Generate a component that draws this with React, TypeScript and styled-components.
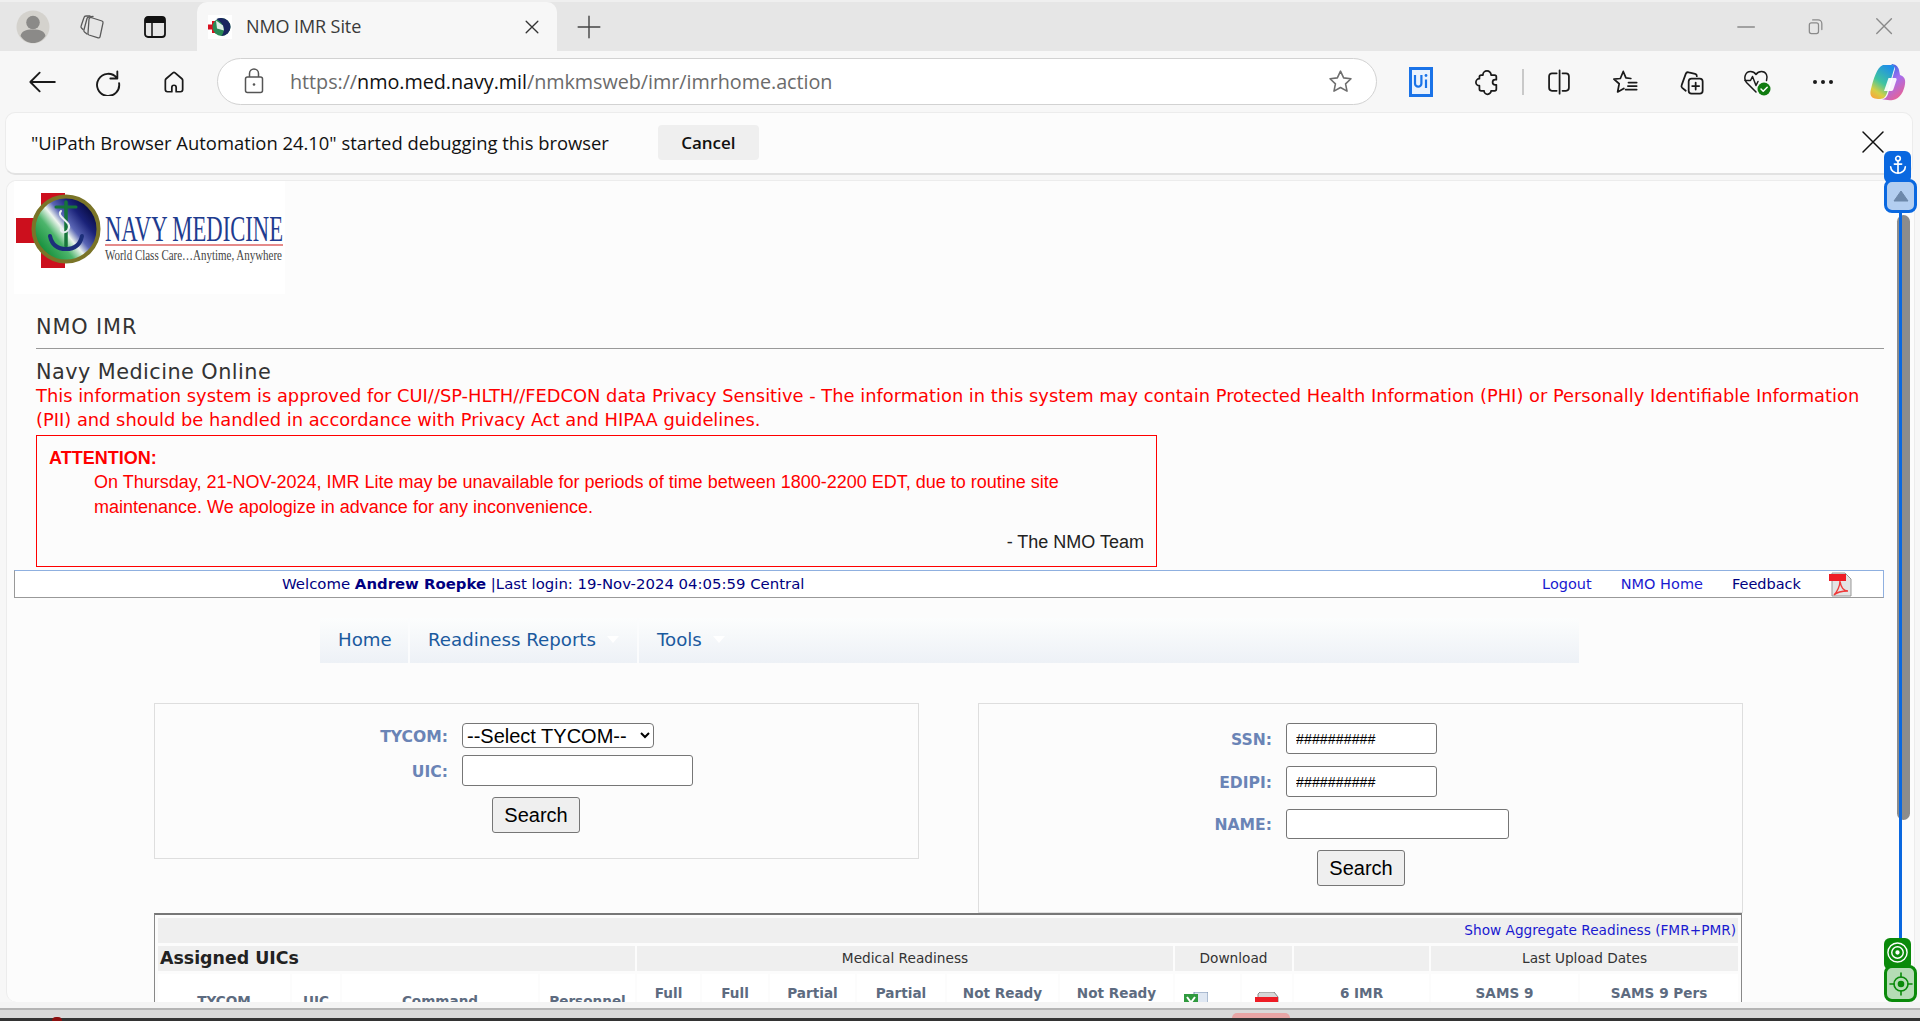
import React from 'react';
import styled, { createGlobalStyle } from 'styled-components';

const GlobalStyle = createGlobalStyle`
  html, body {
    margin: 0;
    padding: 0;
    background: #f7f7f7;
    overflow: hidden;
  }
  * { box-sizing: border-box; }
`;

const verdana = '"DejaVu Sans", Verdana, sans-serif';
const arial = '"Liberation Sans", Arial, sans-serif';
const segoe = '"Open Sans", "Noto Sans", sans-serif';

const Shell = styled.div`
  position: relative;
  width: 1920px;
  height: 1021px;
  overflow: hidden;
  display: flex;
  flex-direction: column;
  background: #f7f7f7;
`;

/* ---- browser chrome ---- */
const TabBar = styled.div`
  height: 51px;
  flex: none;
  display: flex;
  align-items: flex-end;
  background: #e6e6e6;
  border-top: 2px solid #efefef;
`;
const ChromeIcon = styled.span<{ $w: number; $ml?: number }>`
  width: ${(p) => p.$w}px;
  height: 49px;
  margin-left: ${(p) => p.$ml || 0}px;
  flex: none;
  display: flex;
  align-items: center;
  justify-content: center;
`;
const Tab = styled.div`
  width: 360px;
  height: 49px;
  margin-left: 30px;
  flex: none;
  display: flex;
  align-items: center;
  padding-left: 11px;
  background: #f7f7f7;
  border-radius: 10px 10px 0 0;
  font: 400 18px ${segoe};
  color: #3a3a3a;
`;
const TabTitle = styled.span`
  margin: -2px 0 0 14px;
  flex: 1;
  letter-spacing: -0.1px;
`;
const WindowButtons = styled.div`
  margin-left: auto;
  padding-right: 1px;
  display: flex;
`;
const Toolbar = styled.div`
  height: 61px;
  flex: none;
  display: flex;
  align-items: center;
  padding-left: 9px;
`;
const ToolIcon = styled.span<{ $w?: number }>`
  width: ${(p) => p.$w || 66}px;
  flex: none;
  display: flex;
  justify-content: center;
  align-items: center;
`;
const AddressBar = styled.div`
  width: 1160px;
  height: 47px;
  margin: -1px 11px 0 10px;
  flex: none;
  display: flex;
  align-items: center;
  padding: 0 22px 0 26px;
  background: #fff;
  border: 1.5px solid #d2d2d2;
  border-radius: 24px;
`;
const Url = styled.span`
  flex: 1;
  margin-left: 26px;
  font: 400 19.8px ${segoe};
  color: #6b6b6b;
  letter-spacing: -0.05px;
  b {
    font-weight: 400;
    color: #111;
  }
`;
const ToolDivider = styled.span`
  width: 2px;
  height: 26px;
  margin: 0 2px;
  flex: none;
  background: #c9c9c9;
`;
const InfoBar = styled.div`
  height: 63px;
  margin: 0 7px 5px 5px;
  flex: none;
  display: flex;
  align-items: center;
  padding: 0 27px 2px 25px;
  background: #fcfcfc;
  border: 1px solid #ececec;
  border-bottom: 2px solid #e2e2e2;
  border-radius: 10px;
  font: 400 18.4px ${segoe};
  color: #111;
`;
const CancelButton = styled.span`
  width: 101px;
  height: 35px;
  margin-left: 49px;
  display: flex;
  align-items: center;
  justify-content: center;
  background: #efefef;
  border-radius: 4px;
  font-size: 17px;
  font-weight: 600;
`;
const InfoClose = styled.span`
  margin-left: auto;
  display: flex;
`;

/* ---- the page ---- */
const Page = styled.main`
  height: 822px;
  margin: 0 5px 0 6px;
  flex: none;
  overflow: hidden;
  background: #fcfcfc;
  border: 1px solid #ececec;
  border-bottom: 0;
  border-radius: 10px;
  font-family: ${verdana};
`;
const LogoBox = styled.div`
  width: 271px;
  height: 113px;
  margin-left: 7px;
  background: #fff;
`;
const PageHead = styled.div`
  margin: 0 30px 0 29px;
`;
const SiteName = styled.div`
  height: 55px;
  padding-top: 20px;
  border-bottom: 1px solid #999;
  font-size: 20.8px;
  line-height: 26px;
  letter-spacing: 0.9px;
  color: #333;
`;
const SiteTitle = styled.h1`
  margin: 11px 0 0;
  font-size: 20.8px;
  font-weight: 400;
  line-height: 24px;
  letter-spacing: 0.45px;
  color: #333;
`;
const Notice = styled.p`
  margin: 0;
  font-size: 17.85px;
  line-height: 24px;
  color: #f00;
`;
const AttentionBox = styled.div`
  width: 1121px;
  height: 132px;
  margin-top: 3px;
  padding: 10px 12px 0;
  border: 1px solid #f00;
  font-family: ${arial};
  font-size: 18px;
  color: #f00;
`;
const AttentionTitle = styled.div`
  font-weight: 700;
  line-height: 24px;
`;
const AttentionBody = styled.div`
  width: 1030px;
  margin-left: 45px;
  line-height: 25px;
`;
const AttentionSign = styled.div`
  margin-top: 10px;
  text-align: right;
  line-height: 25px;
  color: #222;
`;
const WelcomeBar = styled.div`
  height: 28px;
  width: 1870px;
  margin: 3px 0 0 7px;
  display: flex;
  align-items: center;
  padding-left: 267px;
  background: #fff;
  border: 1px solid #999;
  border-top-color: #8fb0e0;
  border-right-color: #8fb0e0;
  font-size: 14.9px;
  color: #000080;
`;
const WelcomeLinks = styled.div`
  margin-left: auto;
  display: flex;
  align-items: center;
  padding-right: 30px;
`;
const TopLink = styled.a<{ $dark?: boolean; $mr: number }>`
  margin-right: ${(p) => p.$mr}px;
  font-size: 14.5px;
  color: ${(p) => (p.$dark ? '#000080' : '#1a1ad0')};
`;
const MainMenu = styled.nav`
  width: 1259px;
  height: 45px;
  margin: 20px 0 0 313px;
  display: flex;
  background: linear-gradient(#fcfdfd, #edf1f6);
`;
const MenuItem = styled.a<{ $w: number }>`
  width: ${(p) => p.$w}px;
  display: flex;
  align-items: center;
  padding: 0 0 2px 18px;
  border-right: 2px solid #fbfcfd;
  font-size: 18.2px;
  color: #1b5a9e;
  &:last-child {
    border-right: 0;
  }
`;
const MenuCaret = styled.i`
  width: 0;
  height: 0;
  margin-left: 11px;
  border: 6px solid transparent;
  border-top: 7px solid #fff;
  border-bottom: 0;
`;
const SearchRow = styled.div`
  display: flex;
  align-items: flex-start;
  gap: 59px;
  margin: 40px 0 0 147px;
`;
const SearchPanel = styled.form<{ $gap: number; $pb: number }>`
  width: 765px;
  padding: 19px 0 ${(p) => p.$pb}px;
  display: grid;
  grid-template-columns: 293px auto;
  column-gap: 14px;
  row-gap: ${(p) => p.$gap}px;
  justify-content: start;
  align-items: center;
  border: 1px solid #dedede;
`;
const FieldLabel = styled.label`
  padding-top: 2px;
  text-align: right;
  font-size: 15.6px;
  font-weight: 700;
  color: #6a84b6;
`;
const TextField = styled.input<{ $w: number; $h: number }>`
  width: ${(p) => p.$w}px;
  height: ${(p) => p.$h}px;
  padding: 0 9px;
  background: #fff;
  border: 1px solid #767676;
  border-radius: 3px;
  font: 400 14.3px ${arial};
  color: #000;
`;
const TycomSelect = styled.select`
  width: 192px;
  height: 25px;
  background: #fff;
  border: 1px solid #767676;
  border-radius: 4px;
  font: 400 20px ${arial};
  color: #000;
`;
const SearchButton = styled.button<{ $mt: number; $ml: number }>`
  grid-column: 2;
  width: 88px;
  height: 36px;
  margin: ${(p) => p.$mt}px 0 0 ${(p) => p.$ml}px;
  padding: 0;
  background: #efefef;
  border: 1px solid #767676;
  border-radius: 3px;
  font: 400 20px ${arial};
  color: #000;
`;
const TableFrame = styled.div`
  width: 1588px;
  margin-left: 147px;
  padding: 0 1px;
  background: #fcfcfc;
  border: 1px solid #888;
  border-top: 2px solid #777;
`;
const UicTable = styled.table`
  width: 1584px;
  table-layout: fixed;
  border-collapse: separate;
  border-spacing: 2px 3px;
  font-size: 13.7px;
`;
const BandCell = styled.td<{ $align?: string }>`
  height: 25px;
  padding: 0 2px 2px;
  background: #efefef;
  text-align: ${(p) => p.$align || 'center'};
  color: #333;
  white-space: nowrap;
`;
const AggregateLink = styled.a`
  color: #1a1ad0;
`;
const GridTitle = styled.span`
  font-size: 17.4px;
  font-weight: 700;
  color: #222;
`;
const HeadCell = styled.th<{ $low?: boolean }>`
  height: 60px;
  padding: ${(p) => (p.$low ? '18px' : '10px')} 0 0;
  vertical-align: top;
  background: #fff;
  font-size: 13.6px;
  font-weight: 700;
  line-height: 18px;
  color: #5d6b80;
  white-space: nowrap;
`;
const IconHeadCell = styled(HeadCell)`
  padding-left: 9px;
  text-align: left;
`;
const BottomStrip = styled.div`
  position: relative;
  flex: 1;
  border-top: 6px solid #f4f4f4;
  background: #d9d9d9;
  &::before {
    content: '';
    display: block;
    height: 2px;
    background: #b4b4b4;
  }
  &::after {
    content: '';
    position: absolute;
    left: 0;
    right: 0;
    bottom: 0;
    height: 3px;
    background: #333;
  }
`;
const PinkPill = styled.span`
  position: absolute;
  left: 1232px;
  bottom: 3px;
  width: 58px;
  height: 5px;
  border-radius: 6px 6px 0 0;
  background: #e8a5a5;
`;
const RedDot = styled.span`
  position: absolute;
  left: 52px;
  bottom: 0;
  width: 10px;
  height: 4px;
  z-index: 1;
  border-radius: 5px 5px 0 0;
  background: #8c1010;
`;

/* ---- scroll markers that lie over the page ---- */
const ScrollThumb = styled.span`
  position: absolute;
  left: 1897px;
  top: 215px;
  width: 13px;
  height: 605px;
  border-radius: 7px;
  background: #8c8c8c;
`;
const RailLine = styled.span`
  position: absolute;
  left: 1899px;
  top: 205px;
  width: 3px;
  height: 740px;
  background: #0a68e0;
`;
const MarkerTab = styled.span<{ $color: string; $top: number }>`
  position: absolute;
  left: 1884px;
  top: ${(p) => p.$top}px;
  width: 27px;
  height: 32px;
  padding-top: 3px;
  display: flex;
  justify-content: center;
  border-radius: 6px;
  background: ${(p) => p.$color};
`;
const MarkerBox = styled.span<{ $color: string; $fill: string; $top: number; $h: number }>`
  position: absolute;
  left: 1884px;
  top: ${(p) => p.$top}px;
  width: 33px;
  height: ${(p) => p.$h}px;
  display: flex;
  align-items: center;
  justify-content: center;
  border: 3px solid ${(p) => p.$color};
  border-radius: 8px;
  background: ${(p) => p.$fill};
`;

/* ---- drawings ---- */
const Ink = ({ size, children, color = '#1a1a1a', sw = 1.6 }: { size: number; children: React.ReactNode; color?: string; sw?: number }) => (
  <svg width={size} height={size} viewBox="0 0 24 24" fill="none" stroke={color} strokeWidth={sw} strokeLinecap="round" strokeLinejoin="round">
    {children}
  </svg>
);

const NavyLogo = () => (
  <svg width="271" height="113" viewBox="0 0 271 113" style={{ display: 'block' }}>
    <defs>
      <linearGradient id="globeFill" x1="0.1" y1="0.85" x2="0.9" y2="0.2">
        <stop offset="0" stopColor="#0d8a35" />
        <stop offset="0.32" stopColor="#4db56c" />
        <stop offset="0.48" stopColor="#eef5ef" />
        <stop offset="0.6" stopColor="#5a66b5" />
        <stop offset="0.8" stopColor="#1a2278" />
        <stop offset="1" stopColor="#070a40" />
      </linearGradient>
    </defs>
    <path d="M27 12h24v75H27V62H2V37h25z" fill="#cc0f1d" />
    <circle cx="52" cy="48" r="32.500" fill="url(#globeFill)" stroke="#7a7428" strokeWidth="4" />
    <g fill="none" strokeLinecap="round">
      <path d="M42 26h20" stroke="#16753a" strokeWidth="3" />
      <path d="M52 21v44" stroke="#16753a" strokeWidth="3.500" />
      <path d="M47 30c-6 6 13 11 7 19-3 4-8 2-7-2" stroke="#e8eef0" strokeWidth="2" />
      <path d="M36 55c2 10 9 13 16 13s14-3 16-13" stroke="#1c2f7a" strokeWidth="4" />
    </g>
    <text x="91" y="60" textLength="178" lengthAdjust="spacingAndGlyphs" fontFamily='"Liberation Serif", serif' fontSize="36" fill="#1f3c8f">NAVY MEDICINE</text>
    <rect x="91" y="63" width="178" height="2" fill="#e58a8a" />
    <text x="91" y="79" textLength="177" lengthAdjust="spacingAndGlyphs" fontFamily='"Liberation Serif", serif' fontSize="15" fill="#444">World Class Care…Anytime, Anywhere</text>
  </svg>
);

const Favicon = () => (
  <svg width="24" height="24" viewBox="0 0 24 24">
    <rect width="24" height="24" fill="#fff" />
    <path d="M4 6h5v12H4v-3.500H0v-5h4z" fill="#d8101f" />
    <circle cx="13.500" cy="12" r="9" fill="#2a8a55" />
    <path d="M13.500 3a9 9 0 0 1 0 18c4-5 3-12-5-17a9 9 0 0 1 5-1z" fill="#1a2660" />
    <path d="M8 5.500l7 5 1 5-7-2z" fill="#dfeee6" />
  </svg>
);

const PdfIcon = () => (
  <svg width="24" height="25" viewBox="0 0 24 25">
    <path d="M3 1h13l6 6v17H3z" fill="#e4e4e4" stroke="#999" />
    <path d="M0 2h17v7H0z" fill="#ee1c25" />
    <path d="M11 9c1 7 4 10 8 10-4 0-10 0-14 4 3-3 6-9 6-14z" fill="none" stroke="#ee3a3a" strokeWidth="1.400" />
  </svg>
);

const XlsIcon = () => (
  <svg width="24" height="24" viewBox="0 0 24 24">
    <path d="M10 0h14v20H10z" fill="#dfe7f2" stroke="#7b92b2" />
    <path d="M0 2h14v18H0z" fill="#2f9a3e" />
    <path d="M3 5l8 11M11 5l-8 11" stroke="#fff" strokeWidth="2" />
  </svg>
);

const RedDocIcon = () => (
  <svg width="26" height="24" viewBox="0 0 26 24">
    <path d="M6 0h14l4 5v17H4V2z" fill="#d7d7d7" stroke="#888" />
    <path d="M1 5h23v7H1z" fill="#ee1c25" />
  </svg>
);

const CopilotIcon = () => (
  <svg width="36" height="38" viewBox="0 0 36 38">
    <defs>
      <linearGradient id="copLeft" x1="0.7" y1="0" x2="0.2" y2="1">
        <stop offset="0" stopColor="#1f8fe8" />
        <stop offset="0.5" stopColor="#3fc4a0" />
        <stop offset="0.8" stopColor="#d6cf45" />
        <stop offset="1" stopColor="#f6a83c" />
      </linearGradient>
      <linearGradient id="copRight" x1="0.3" y1="0" x2="0.8" y2="1">
        <stop offset="0" stopColor="#2468e0" />
        <stop offset="0.45" stopColor="#a46ef0" />
        <stop offset="1" stopColor="#f0608a" />
      </linearGradient>
    </defs>
    <path d="M13 2h9c2 0 3 2 2 4l-7 24c-1 3-3 6-7 6H8c-6 0-9-3-7-10C3 17 7 4 13 2z" fill="url(#copLeft)" />
    <path d="M21 1c4 0 7 2 8 6l1 5c3 1 6 3 5 9-1 7-5 15-12 16-4 .5-8 0-11-1 3 0 5-2 6-5l7-25c0-2-2-4-4-5z" fill="url(#copRight)" />
    <path d="M18.500 15h7c1 0 1.300 1 1 2l-3 9c-.4 1-1 2-2 2h-7.500z" fill="#fff" opacity="0.92" />
  </svg>
);

export default function App() {
  return (
    <Shell>
      <GlobalStyle />
      <TabBar>
        <ChromeIcon $w={40} $ml={13}>
          <svg width="34" height="34" viewBox="0 0 34 34">
            <circle cx="17" cy="17" r="16.500" fill="#d4d2cd" />
            <circle cx="17" cy="12.500" r="6.800" fill="#8b8a88" />
            <path d="M4.500 26c1-5 5-6.500 12.500-6.500S28.500 21 29.500 26c-3 4.500-7.500 7-12.500 7s-9.500-2.500-12.500-7z" fill="#8b8a88" />
          </svg>
        </ChromeIcon>
        <ChromeIcon $w={26} $ml={26}>
          <svg width="26" height="26" viewBox="0 0 26 26" fill="none" stroke="#5a5a5a" strokeWidth="1.300" strokeLinejoin="round" strokeLinecap="round">
            <path d="M12 3.500 23 7c.8.300 1.200 1 1 1.800l-3 14c-.2.800-1 1.200-1.800 1L10 21c-.8-.300-1.200-1-1-1.800l1-14c.1-1 1-1.900 2-1.700z" />
            <path d="M8 20 5.500 18c-.7-.5-.8-1.200-.6-2L8 4.500C8.300 3.500 9 3 10 3l4-.5" />
            <path d="M4 15.500 2.500 14c-.6-.6-.7-1.200-.4-2L5 3.500C5.300 2.500 6 2 7 2h4" />
          </svg>
        </ChromeIcon>
        <ChromeIcon $w={24} $ml={38}>
          <svg width="24" height="24" viewBox="0 0 24 24" fill="none">
            <rect x="2" y="2" width="20" height="20" rx="3" stroke="#111" strokeWidth="1.800" />
            <path d="M2 5a3 3 0 0 1 3-3h14a3 3 0 0 1 3 3v3H2z" fill="#111" />
            <path d="M9 8v14" stroke="#111" strokeWidth="1.500" />
          </svg>
        </ChromeIcon>
        <Tab>
          <Favicon />
          <TabTitle>NMO IMR Site</TabTitle>
          <ChromeIcon $w={50}>
            <Ink size={20} color="#333"><path d="M5 5l14 14M19 5 5 19" /></Ink>
          </ChromeIcon>
        </Tab>
        <ChromeIcon $w={64}>
          <Ink size={26} color="#444" sw={1.300}><path d="M12 2v20M2 12h20" /></Ink>
        </ChromeIcon>
        <WindowButtons>
          <ChromeIcon $w={68}><Ink size={22} color="#8a8a8a" sw={1.500}><path d="M2 12h18" /></Ink></ChromeIcon>
          <ChromeIcon $w={70}>
            <Ink size={20} color="#8a8a8a" sw={1.500}>
              <rect x="4" y="7" width="11" height="13" rx="2.500" />
              <path d="M8 3.500h6.500A4.500 4.500 0 0 1 19 8v7" />
            </Ink>
          </ChromeIcon>
          <ChromeIcon $w={68}><Ink size={22} color="#8a8a8a" sw={1.500}><path d="M3 3l16 16M19 3 3 19" /></Ink></ChromeIcon>
        </WindowButtons>
      </TabBar>

      <Toolbar>
        <ToolIcon><Ink size={28}><path d="M23 12H2M10 4l-8 8 8 8" /></Ink></ToolIcon>
        <ToolIcon>
          <Ink size={28}><path d="M20 3v6h-6M19.500 8.500A9.500 9.500 0 1 0 21.500 13" /></Ink>
        </ToolIcon>
        <ToolIcon>
          <Ink size={26}><path d="M10 21H6a2 2 0 0 1-2-2v-8.500a2 2 0 0 1 .7-1.500L11 3.500a1.500 1.500 0 0 1 2 0L19.300 9a2 2 0 0 1 .7 1.500V19a2 2 0 0 1-2 2h-4v-4a2 2 0 0 0-4 0z" /></Ink>
        </ToolIcon>
        <AddressBar>
          <svg width="20" height="26" viewBox="0 0 20 26" fill="none" stroke="#555" strokeWidth="1.500">
            <rect x="1.500" y="9" width="17" height="15.500" rx="2" />
            <path d="M5.500 9V5.500a4.500 4.500 0 0 1 9 0V9" />
            <circle cx="10" cy="16.500" r="1.300" fill="#555" stroke="none" />
          </svg>
          <Url>https://<b>nmo.med.navy.mil</b>/nmkmsweb/imr/imrhome.action</Url>
          <Ink size={27} color="#6e6e6e" sw={1.400}>
            <path d="M12 2.800l2.800 6 6.500.8-4.800 4.500 1.300 6.500L12 17.300l-5.800 3.300 1.300-6.500L2.700 9.600l6.500-.8z" />
          </Ink>
        </AddressBar>
        <ToolIcon>
          <svg width="24" height="30" viewBox="0 0 24 30">
            <rect x="1.500" y="1.500" width="21" height="27" fill="#eaf2fd" stroke="#1a73e8" strokeWidth="3" />
            <path d="M6 8v8.500a3.200 3.200 0 0 0 6.400 0V8M17 12.500V21" fill="none" stroke="#1a73e8" strokeWidth="2.200" />
            <circle cx="17" cy="8.500" r="1.400" fill="#1a73e8" />
          </svg>
        </ToolIcon>
        <ToolIcon>
          <Ink size={28} sw={1.500}>
            <path d="M8.500 6a3.500 3.500 0 0 1 7 0h3a1.500 1.500 0 0 1 1.500 1.500V10h-1a2.200 2.200 0 0 0 0 4.400h1V18a1.500 1.500 0 0 1-1.500 1.500h-3a3 3 0 0 1-6 0H7A1.500 1.500 0 0 1 5.500 18v-2.800a3 3 0 0 1 0-6V7.500A1.500 1.500 0 0 1 7 6z" />
          </Ink>
        </ToolIcon>
        <ToolDivider />
        <ToolIcon>
          <Ink size={28} sw={1.500}>
            <path d="M10 4.500H6A2.500 2.500 0 0 0 3.500 7v10A2.500 2.500 0 0 0 6 19.500h4M15 4.500h3A2.500 2.500 0 0 1 20.500 7v10a2.500 2.500 0 0 1-2.500 2.500h-3M12.500 2v20" />
          </Ink>
        </ToolIcon>
        <ToolIcon>
          <Ink size={28} sw={1.500}>
            <path d="M10.500 3l2.300 5.500 4.200.5M2.500 9.500 8 9l2.500-6M2.500 9.500l4.500 4-1.300 7 5.300-3" />
            <path d="M15 12.500h7M14.500 15.500h7.500M12.500 18.500h9.500" />
          </Ink>
        </ToolIcon>
        <ToolIcon>
          <Ink size={28} sw={1.500}>
            <rect x="10" y="9" width="12" height="13" rx="2.500" />
            <path d="M16 12.500v6M13 15.500h6M7.500 19.500 4.500 17a2 2 0 0 1-.5-2.300L7.500 5A2 2 0 0 1 10 3.800L15.500 5a2 2 0 0 1 1.500 2" />
          </Ink>
        </ToolIcon>
        <ToolIcon>
          <svg width="30" height="30" viewBox="0 0 30 30" fill="none" stroke="#1a1a1a" strokeWidth="1.500" strokeLinejoin="round" strokeLinecap="round">
            <path d="M14 25 4.500 15.500C1 11 3.500 4.500 8.500 4.500c3 0 4.500 1.500 5.500 3 1-1.500 2.500-3 5.500-3 5 0 6.500 5 5 9" />
            <path d="M3 13.500h5.500l2-4 3.500 9 2-4" />
            <circle cx="22" cy="22" r="6.500" fill="#107c10" stroke="none" />
            <path d="M19 22l2.200 2.200 4-4" stroke="#fff" />
          </svg>
        </ToolIcon>
        <ToolIcon>
          <svg width="22" height="6" viewBox="0 0 22 6"><g fill="#1a1a1a"><circle cx="3" cy="3" r="2" /><circle cx="11" cy="3" r="2" /><circle cx="19" cy="3" r="2" /></g></svg>
        </ToolIcon>
        <ToolIcon $w={64}><CopilotIcon /></ToolIcon>
      </Toolbar>

      <InfoBar>
        <span>"UiPath Browser Automation 24.10" started debugging this browser</span>
        <CancelButton>Cancel</CancelButton>
        <InfoClose>
          <Ink size={24} color="#111" sw={1.500}><path d="M2 2l20 20M22 2 2 22" /></Ink>
        </InfoClose>
      </InfoBar>

      <Page>
        <LogoBox><NavyLogo /></LogoBox>
        <PageHead>
          <SiteName>NMO IMR</SiteName>
          <SiteTitle>Navy Medicine Online</SiteTitle>
          <Notice>
            This information system is approved for CUI//SP-HLTH//FEDCON data Privacy Sensitive - The information in this system may contain Protected Health Information (PHI) or Personally Identifiable Information (PII) and should be handled in accordance with Privacy Act and HIPAA guidelines.
          </Notice>
          <AttentionBox>
            <AttentionTitle>ATTENTION:</AttentionTitle>
            <AttentionBody>
              On Thursday, 21-NOV-2024, IMR Lite may be unavailable for periods of time between 1800-2200 EDT, due to routine site maintenance. We apologize in advance for any inconvenience.
            </AttentionBody>
            <AttentionSign>- The NMO Team</AttentionSign>
          </AttentionBox>
        </PageHead>
        <WelcomeBar>
          <span>Welcome <b>Andrew Roepke</b> |Last login: 19-Nov-2024 04:05:59 Central</span>
          <WelcomeLinks>
            <TopLink $mr={29}>Logout</TopLink>
            <TopLink $mr={29}>NMO Home</TopLink>
            <TopLink $dark $mr={28}>Feedback</TopLink>
            <PdfIcon />
          </WelcomeLinks>
        </WelcomeBar>
        <MainMenu>
          <MenuItem $w={90}>Home</MenuItem>
          <MenuItem $w={229}>Readiness Reports<MenuCaret /></MenuItem>
          <MenuItem $w={110}>Tools<MenuCaret /></MenuItem>
        </MainMenu>
        <SearchRow>
          <SearchPanel $gap={7} $pb={25}>
            <FieldLabel>TYCOM:</FieldLabel>
            <TycomSelect defaultValue="">
              <option value="">--Select TYCOM--</option>
            </TycomSelect>
            <FieldLabel>UIC:</FieldLabel>
            <TextField $w={231} $h={31} />
            <SearchButton type="button" $mt={4} $ml={30}>Search</SearchButton>
          </SearchPanel>
          <SearchPanel $gap={12} $pb={26}>
            <FieldLabel>SSN:</FieldLabel>
            <TextField $w={151} $h={31} defaultValue="##########" />
            <FieldLabel>EDIPI:</FieldLabel>
            <TextField $w={151} $h={31} defaultValue="##########" />
            <FieldLabel>NAME:</FieldLabel>
            <TextField $w={223} $h={30} />
            <SearchButton type="button" $mt={-1} $ml={31}>Search</SearchButton>
          </SearchPanel>
        </SearchRow>
        <TableFrame>
          <UicTable>
            <colgroup>
              {[132, 48, 196, 95, 63, 66, 85, 88, 111, 113, 65, 50, 135, 147, 158].map((w, i) => (
                <col key={i} style={{ width: w }} />
              ))}
            </colgroup>
            <tbody>
              <tr>
                <BandCell colSpan={15} $align="right">
                  <AggregateLink>Show Aggregate Readiness (FMR+PMR)</AggregateLink>
                </BandCell>
              </tr>
              <tr>
                <BandCell colSpan={4} $align="left"><GridTitle>Assigned UICs</GridTitle></BandCell>
                <BandCell colSpan={6}>Medical Readiness</BandCell>
                <BandCell colSpan={2}>Download</BandCell>
                <BandCell />
                <BandCell colSpan={2}>Last Upload Dates</BandCell>
              </tr>
              <tr>
                <HeadCell $low>TYCOM</HeadCell>
                <HeadCell $low>UIC</HeadCell>
                <HeadCell $low>Command</HeadCell>
                <HeadCell $low>Personnel</HeadCell>
                <HeadCell>Full</HeadCell>
                <HeadCell>Full</HeadCell>
                <HeadCell>Partial</HeadCell>
                <HeadCell>Partial</HeadCell>
                <HeadCell>Not Ready</HeadCell>
                <HeadCell>Not Ready</HeadCell>
                <IconHeadCell $low><XlsIcon /></IconHeadCell>
                <HeadCell $low><RedDocIcon /></HeadCell>
                <HeadCell>6 IMR</HeadCell>
                <HeadCell>SAMS 9</HeadCell>
                <HeadCell>SAMS 9 Pers</HeadCell>
              </tr>
            </tbody>
          </UicTable>
        </TableFrame>
      </Page>
      <BottomStrip>
        <RedDot />
        <PinkPill />
      </BottomStrip>

      <ScrollThumb />
      <RailLine />
      <MarkerTab $color="#0a68e0" $top={151}>
        <Ink size={22} color="#fff" sw={1.800}>
          <circle cx="12" cy="5" r="2.500" />
          <path d="M12 7.500V21M8 11h8M4 14c0 4 4 7 8 7s8-3 8-7" />
        </Ink>
      </MarkerTab>
      <MarkerBox $color="#0a68e0" $fill="#b3cef0" $top={179} $h={34}>
        <svg width="16" height="12" viewBox="0 0 16 12"><path d="M8 1 15 11H1z" fill="#6d88aa" stroke="#6d88aa" strokeLinejoin="round" /></svg>
      </MarkerBox>
      <MarkerTab $color="#0a8a0a" $top={938}>
        <Ink size={23} color="#fff" sw={1.500}>
          <circle cx="12" cy="12" r="10" />
          <circle cx="12" cy="12" r="6" />
          <circle cx="12" cy="12" r="1.500" fill="#fff" />
        </Ink>
      </MarkerTab>
      <MarkerBox $color="#0a8a0a" $fill="#b5dcb5" $top={965} $h={37}>
        <Ink size={24} color="#0a8a0a" sw={1.600}>
          <circle cx="12" cy="12" r="7" />
          <circle cx="12" cy="12" r="2.500" fill="#0a8a0a" />
          <path d="M12 1v4M12 19v4M1 12h4M19 12h4" />
        </Ink>
      </MarkerBox>
    </Shell>
  );
}
